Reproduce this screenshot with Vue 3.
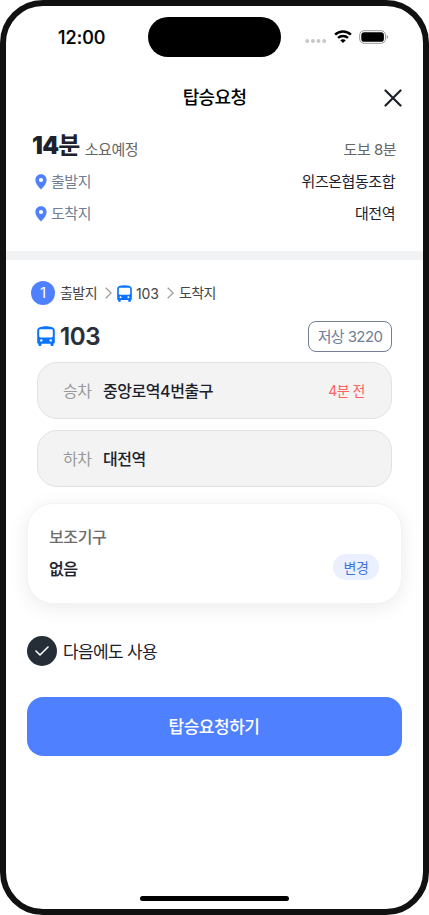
<script setup>
const places = [
  { label: '출발지', value: '위즈온협동조합' },
  { label: '도착지', value: '대전역' },
]
const stops = [
  { label: '승차', name: '중앙로역4번출구', eta: '4분 전' },
  { label: '하차', name: '대전역', eta: '' },
]
const busBody =
  'M3.500 0.900C6.500 -0.100 11.500 -0.100 14.500 0.900C16.600 1.500 17.800 2.600 17.800 4.600V16.200C17.800 17.100 17.300 17.600 16.600 17.700V18.900C16.600 20.300 13.500 20.300 13.500 18.900V17.700H4.500V18.900C4.500 20.300 1.400 20.300 1.400 18.900V17.700C0.700 17.600 0.200 17.100 0.200 16.200V4.600C0.200 2.600 1.400 1.500 3.500 0.900Z'
const busWindow =
  'M3.600 3.300H14.400C15.300 3.300 15.800 3.800 15.800 4.700V10C15.800 10.900 15.300 11.400 14.400 11.400H3.600C2.700 11.400 2.200 10.900 2.200 10V4.700C2.200 3.800 2.700 3.300 3.600 3.300Z'
</script>

<template>
  <div class="phone">
    <div class="status">
      <span class="clock">12:00</span>
      <span class="island"></span>
      <div class="indicators">
        <svg class="dots" viewBox="0 0 22 4" width="22" height="4">
          <circle cx="2.200" cy="2" r="2" /><circle cx="7.900" cy="2" r="2" />
          <circle cx="13.500" cy="2" r="2" /><circle cx="19.200" cy="2" r="2" />
        </svg>
        <svg class="wifi" viewBox="0 0 18 13" width="18" height="13">
          <path d="M1.100 4.600C5.500 0.300 12.500 0.300 16.900 4.600" />
          <path d="M4 7.900C6.800 5.300 11.200 5.300 14 7.900" />
          <path class="wedge" d="M6.200 10.200C7.800 8.900 10.200 8.900 11.800 10.200L9 13Z" />
        </svg>
        <svg class="battery" viewBox="0 0 30 14" width="30" height="14">
          <rect class="shell" x="0.700" y="0.700" width="25.800" height="12.600" rx="4.300" />
          <rect x="2.300" y="2.200" width="22.600" height="9.600" rx="2.900" />
          <path class="cap" d="M27.800 4.900Q30.200 7 27.800 9.100Z" />
        </svg>
      </div>
    </div>

    <header class="titlebar">
      <h1>탑승요청</h1>
      <svg class="close" viewBox="0 0 18 18" width="18" height="18"><path d="M1.500 1.500L16.500 16.500M16.500 1.500L1.500 16.500" /></svg>
    </header>

    <section class="summary">
      <div class="time">
        <div class="total"><strong><b>14</b>분</strong><span class="expect">소요예정</span></div>
        <span class="walk">도보 8분</span>
      </div>
      <div v-for="p in places" :key="p.label" class="place">
        <svg viewBox="0 0 12 16" width="12" height="16">
          <path fill-rule="evenodd" d="M6 0.300C9.200 0.300 11.600 2.700 11.600 5.900C11.600 9.600 8.300 13 6 15.500C3.700 13 0.400 9.600 0.400 5.900C0.400 2.700 2.800 0.300 6 0.300ZM6 3.900A2.100 2.100 0 1 0 6 8.100A2.100 2.100 0 1 0 6 3.900Z" />
        </svg>
        <span class="place-label">{{ p.label }}</span>
        <span class="place-value">{{ p.value }}</span>
      </div>
    </section>
    <div class="divider"></div>

    <section class="route">
      <div class="crumbs">
        <span class="step">1</span>
        <span class="crumb">출발지</span>
        <svg class="chevron" viewBox="0 0 7 12" width="7" height="12"><path d="M0.700 0.700L6.200 6L0.700 11.300" /></svg>
        <svg class="bus" viewBox="0 0 18 20" width="15" height="17" preserveAspectRatio="none"><path :d="busBody" /><path class="hole" :d="busWindow" /><circle class="hole" cx="4.300" cy="14.400" r="1.200" /><circle class="hole" cx="13.700" cy="14.400" r="1.200" /></svg>
        <span class="num">103</span>
        <svg class="chevron" viewBox="0 0 7 12" width="7" height="12"><path d="M0.700 0.700L6.200 6L0.700 11.300" /></svg>
        <span class="crumb">도착지</span>
      </div>
      <div class="line">
        <svg class="bus" viewBox="0 0 18 20" width="18" height="20"><path :d="busBody" /><path class="hole" :d="busWindow" /><circle class="hole" cx="4.300" cy="14.400" r="1.200" /><circle class="hole" cx="13.700" cy="14.400" r="1.200" /></svg>
        <strong>103</strong>
        <span class="tag">저상 3220</span>
      </div>
      <div v-for="s in stops" :key="s.label" class="stop">
        <span class="stop-label">{{ s.label }}</span>
        <span class="stop-name">{{ s.name }}</span>
        <span v-if="s.eta" class="eta">{{ s.eta }}</span>
      </div>
    </section>

    <section class="aid">
      <div class="aid-title">보조기구</div>
      <div class="aid-row">
        <span class="aid-value">없음</span>
        <button class="change">변경</button>
      </div>
    </section>

    <div class="again">
      <span class="check"><svg viewBox="0 0 14 10" width="14" height="10"><path d="M1 5L5 9L13 1" /></svg></span>
      <span class="again-text">다음에도 사용</span>
    </div>
    <button class="submit">탑승요청하기</button>
    <div class="home"></div>
  </div>
</template>

<style>
body { margin: 0; background: #fff; }
</style>

<style scoped>
* { box-sizing: border-box; }
.phone {
  width: 429px; height: 915px; border: 6px solid #111; border-radius: 43px;
  background: #fff; overflow: hidden; color: #1c212b;
  font-family: Inter, 'Noto Sans CJK KR', sans-serif;
  display: flex; flex-direction: column;
}
.phone > * { flex-shrink: 0; }
svg { display: block; flex-shrink: 0; }
button { border: 0; padding: 0; font-family: inherit; }
.status { height: 62px; display: grid; grid-template-columns: 142px 133px 1fr; align-items: center; }
.clock { padding-left: 52px; font-size: 18px; font-weight: 500; color: #000; letter-spacing: 0.050px; -webkit-text-stroke: 0.200px #000; }
.island { height: 39.500px; border-radius: 20px; background: #000; }
.indicators { display: flex; align-items: center; padding: 0 0 1px 24px; }
.dots { fill: #c8c8c8; margin-top: 9px; }
.wifi { margin-left: 6.500px; fill: none; stroke: #000; stroke-width: 2.500; }
.wifi .wedge { fill: #000; stroke: none; }
.battery { margin-left: 7.500px; }
.battery .shell { fill: none; stroke: #9a9a9a; stroke-width: 1; }
.battery .cap { fill: #888; }
.titlebar { height: 58px; padding-top: 1px; display: grid; grid-template-columns: 1fr auto 1fr; align-items: center; }
h1 { margin: 0; padding-top: 1px; grid-column: 2; font-size: 18px; font-weight: 500; color: #000; letter-spacing: -0.650px; line-height: 24px; }
.close { justify-self: end; margin-right: 21px; fill: none; stroke: #1c212b; stroke-width: 2.200; stroke-linecap: round; }
.summary { height: 125px; padding: 0 27px 0 26px; }
.time { height: 39px; padding-top: 1px; display: flex; justify-content: space-between; align-items: flex-start; }
.total { display: flex; align-items: flex-start; }
.time strong { font-size: 24px; font-weight: 700; letter-spacing: -0.600px; line-height: 37px; }
.time b { letter-spacing: -0.700px; }
.expect, .walk { font-size: 15px; color: #666; letter-spacing: -0.500px; line-height: 22px; padding-top: 12px; }
.expect { margin-left: 5px; }
.place { height: 32px; display: flex; align-items: center; padding-left: 3px; font-size: 15px; letter-spacing: -0.450px; }
.place svg { fill: #4f80ff; margin-top: 1px; }
.place span { padding-bottom: 1px; }
.place-label { margin-left: 4px; color: #717e96; }
.place .place-value { margin-left: auto; padding-right: 1px; }
.divider { height: 9px; background: #f1f2f4; }
.route { padding: 17px 31px 0; }
.crumbs { height: 32px; margin-left: -6px; display: flex; align-items: center; font-size: 14px; color: #444; letter-spacing: -0.550px; }
.crumb { padding-bottom: 2px; }
.step { width: 24px; height: 24px; border-radius: 50%; background: #4f80ff; color: #fff; font-size: 15px; line-height: 24px; text-align: center; margin-right: 5px; letter-spacing: 0; }
.chevron { margin: 0 5px 0 8px; fill: none; stroke: #999; stroke-width: 1.200; }
.bus { fill: #0b74ff; }
.bus .hole { fill: #fff; }
.num { margin-left: 4px; letter-spacing: -0.100px; }
.line { height: 53px; padding-top: 1px; display: flex; align-items: center; }
.line strong { margin-left: 5px; padding-top: 1px; font-size: 24px; font-weight: 600; -webkit-text-stroke: 0.200px #292f38; letter-spacing: -0.350px; color: #292f38; }
.tag { margin-left: auto; width: 84px; height: 31px; border: 1px solid #717e96; border-radius: 8px; color: #717e96; font-size: 15px; letter-spacing: -0.600px; line-height: 29px; text-align: center; }
.stop { height: 57px; margin-bottom: 11px; border: 1px solid #e2e2e2; border-radius: 20px; background: #f3f3f3; display: flex; align-items: center; padding: 0 26px 2px 25px; font-size: 16px; letter-spacing: -0.500px; }
.stop-label { color: #999; width: 40px; }
.stop-name { font-weight: 500; letter-spacing: -0.450px; }
.eta { margin-left: auto; font-size: 14px; color: #ff6262; }
.aid { margin: 5px 21px 0; height: 101px; border-radius: 26px; border: 1px solid #f3f3f3; background: #fff; box-shadow: 0 4px 20px rgba(0, 0, 0, 0.080); padding: 18px 21px 0; font-size: 16px; letter-spacing: -0.400px; line-height: 31px; }
.aid-title { font-weight: 500; color: #6d6d6d; }
.aid-row { display: flex; justify-content: space-between; align-items: center; }
.aid-value { font-weight: 500; padding-top: 1px; -webkit-text-stroke: 0.200px #1c212b; }
.change { width: 46px; height: 26px; margin: 0 1px 4px 0; border-radius: 13px; background: #eaf0ff; color: #4276de; font-size: 14px; letter-spacing: -0.500px; line-height: 25px; }
.again { margin: 31px 21px 0; height: 32px; display: flex; align-items: center; gap: 6px; font-size: 17px; letter-spacing: -0.650px; }
.again-text { padding-bottom: 2px; }
.check { width: 30px; height: 30px; border-radius: 50%; background: #252d36; display: grid; place-items: center; }
.check path { fill: none; stroke: #fff; stroke-width: 1.600; stroke-linecap: round; stroke-linejoin: round; }
.submit { margin: 30px 21px 0; height: 59px; padding: 0 1px 2px 0; border-radius: 16px; background: #4f80ff; color: #fff; font-size: 17px; font-weight: 500; letter-spacing: -0.500px; }
.home { margin: auto auto 8px; width: 149px; height: 5px; border-radius: 3px; background: #000; }
</style>
